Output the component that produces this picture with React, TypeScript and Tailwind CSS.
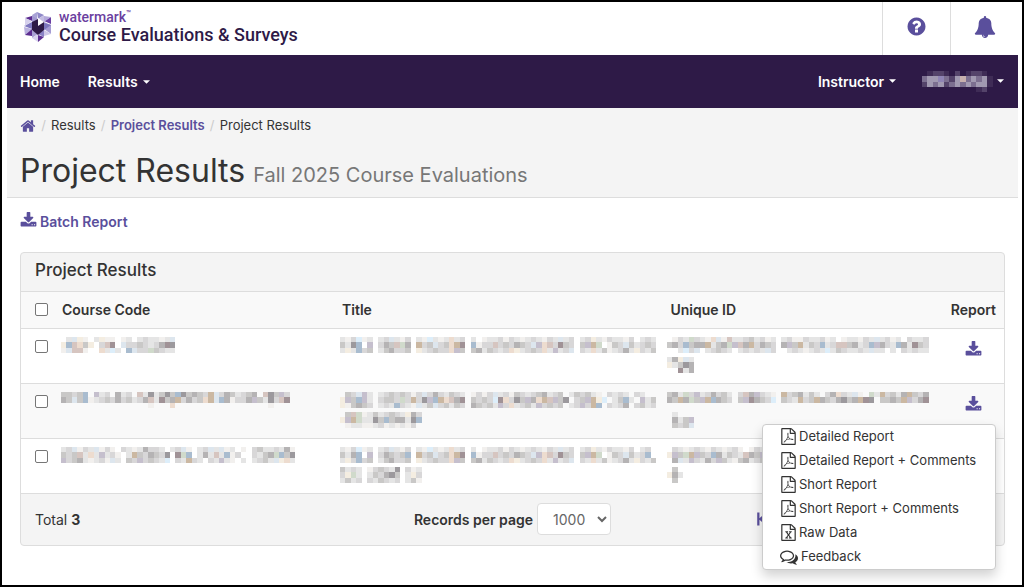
import React from 'react';

const PATHS = {
  home: 'M1472 992v480q0 26-19 45t-45 19h-384v-384h-256v384h-384q-26 0-45-19t-19-45v-480q0-1 .5-3t.5-3l575-474 575 474q1 2 1 6zm223-69l-62 74q-8 9-21 11h-3q-13 0-21-7l-692-577-692 577q-12 8-24 7-13-2-21-11l-62-74q-8-10-7-23.5t11-21.5l719-599q32-26 76-26t76 26l244 204v-195q0-14 9-23t23-9h192q14 0 23 9t9 23v408l219 182q10 8 11 21.5t-7 23.5z',
  help: 'M1024 1376v-192q0-14-9-23t-23-9h-192q-14 0-23 9t-9 23v192q0 14 9 23t23 9h192q14 0 23-9t9-23zm256-672q0-88-55.5-163t-138.5-116-170-41q-243 0-371 213-15 24 8 42l132 100q7 6 19 6 16 0 25-12 53-68 86-92 34-24 86-24 48 0 85.5 26t37.5 59q0 38-20 61t-68 45q-63 28-115.5 86.5t-52.5 125.5v36q0 14 9 23t23 9h192q14 0 23-9t9-23q0-19 21.5-49.5t54.5-49.5q32-18 49-28.5t46-35 44.5-48 28-60.5 12.5-81zm384 192q0 209-103 385.5t-279.5 279.5-385.5 103-385.5-103-279.5-279.5-103-385.5 103-385.5 279.5-279.5 385.5-103 385.5 103 279.5 279.5 103 385.5z',
  bell: 'M912 1696q0-16-16-16-59 0-101.5-42.5t-42.5-101.5q0-16-16-16t-16 16q0 73 51.5 124.5t124.5 51.5q16 0 16-16zm816-288q0 52-38 90t-90 38h-448q0 106-75 181t-181 75-181-75-75-181h-448q-52 0-90-38t-38-90q50-42 91-88t85-119.5 74.5-158.5 50-206 19.5-260q0-152 117-282.5t307-158.5q-8-19-8-39 0-40 28-68t68-28 68 28 28 68q0 20-8 39 190 28 307 158.5t117 282.5q0 139 19.5 260t50 206 74.5 158.5 85 119.5 91 88z',
  download: 'M1344 1344q0-26-19-45t-45-19-45 19-19 45 19 45 45 19 45-19 19-45zm256 0q0-26-19-45t-45-19-45 19-19 45 19 45 45 19 45-19 19-45zm128-224v320q0 40-28 68t-68 28h-1472q-40 0-68-28t-28-68v-320q0-40 28-68t68-28h465l135 136q58 56 136 56t136-56l136-136h464q40 0 68 28t28 68zm-325-569q17 41-14 70l-448 448q-18 19-45 19t-45-19l-448-448q-31-29-14-70 17-39 59-39h256v-448q0-26 19-45t45-19h256q26 0 45 19t19 45v448h256q42 0 59 39z',
  pdf: 'M1596 380q28 28 48 76t20 88v1152q0 40-28 68t-68 28h-1344q-40 0-68-28t-28-68v-1600q0-40 28-68t68-28h896q40 0 88 20t76 48zm-444-244v376h376q-10-29-22-41l-313-313q-12-12-41-22zm384 1528v-1024h-416q-40 0-68-28t-28-68v-416h-768v1536h1280zm-514-593q33 26 84 56 59-7 117-7 147 0 177 49 16 22 2 52 0 1-1 2l-2 2v1q-6 38-71 38-48 0-115-20t-130-53q-221 24-392 83-153 262-242 262-15 0-28-7l-24-12q-1-1-6-5-10-10-6-36 9-40 56-91.5t132-96.5q14-9 23 6 2 2 2 4 52-85 107-197 68-136 104-262-24-82-30.5-159.5t6.5-127.5q11-40 42-40h22q23 0 35 15 18 21 9 68-2 6-4 8 1 3 1 8v30q-2 123-14 192 55 164 146 238zm-576 411q52-24 137-158-51 40-87.5 84t-49.5 74zm398-920q-15 42-2 132 1-7 7-44 0-3 7-43 1-4 4-8-1-1-1-2t-1-2q-1-22-13-36 0 1-1 2v2zm-124 661q135-54 284-81-2-1-13-9.5t-16-13.5q-76-67-127-176-27 86-83 197-30 56-45 83zm646-16q-24-24-140-24 76 28 124 28 14 0 18-1 0-1-2-3z',
  excel: 'M1596 380q28 28 48 76t20 88v1152q0 40-28 68t-68 28h-1344q-40 0-68-28t-28-68v-1600q0-40 28-68t68-28h896q40 0 88 20t76 48zm-444-244v376h376q-10-29-22-41l-313-313q-12-12-41-22zm384 1528v-1024h-416q-40 0-68-28t-28-68v-416h-768v1536h1280zm-979-234v106h281v-106h-75l103-161q5-7 10-16.5t7.5-13.5 3.5-4h2q1 4 5 10 2 4 4.5 7.5t6 8 6.5 8.5l107 161h-76v106h291v-106h-68l-192-273 195-282h67v-107h-279v107h74l-103 159q-4 7-10 16.5t-9 13.5l-2 3h-2q-1-4-5-10-6-11-17-23l-106-159h76v-107h-290v107h68l189 272-194 283h-68z',
  comments: 'M704 384q-153 0-286 52t-211.5 141-78.5 191q0 82 53 158t149 132l97 56-35 84q34-20 62-39l44-31 53 10q78 14 153 14 153 0 286-52t211.5-141 78.5-191-78.5-191-211.5-141-286-52zm0-128q191 0 353.5 68.5t256.5 186.5 94 257-94 257-256.5 186.5-353.5 68.5q-86 0-176-16-124 88-278 128-36 9-86 16h-3q-11 0-20.5-8t-11.5-21q-1-3-1-6.5t.5-6.5 2-6l2.5-5 3.5-5.5 4-5 4.5-5 4-4.5q5-6 23-25t26-29.5 22.5-29 25-38.5 20.5-44q-124-72-195-177t-71-224q0-139 94-257t256.5-186.5 353.5-68.5zm822 1169q10 24 20.5 44t25 38.5 22.5 29 26 29.5 23 25q1 1 4 4.5t4.5 5 4 5 3.5 5.5l2.5 5 2 6 .5 6.5-1 6.5q-3 14-13 22t-22 7q-50-7-86-16-154-40-278-128-90 16-176 16-271 0-472-132 58 4 88 4 161 0 309-45t264-129q125-92 192-212t67-254q0-77-23-152 129 71 204 178t75 230q0 120-71 224.5t-195 176.5z',
  first: 'M320 256h224v560l640-560v1280l-640-560v560h-224z',
  last: 'M1472 256h-224v560l-640-560v1280l640-560v560h224z',
};

type IconName = keyof typeof PATHS;

function Icon({ name, className }: { name: IconName; className: string }) {
  return (
    <svg viewBox="0 0 1792 1792" fill="currentColor" aria-hidden="true" className={className}>
      <path d={PATHS[name]} />
    </svg>
  );
}

function Caret() {
  return (
    <svg viewBox="0 0 8 4" fill="currentColor" aria-hidden="true" className="h-1 w-[7px]">
      <path d="M0 0h8L4 4z" />
    </svg>
  );
}

const TONES: Record<string, string> = {
  a: '#f2f0ee', b: '#e5e5e5', c: '#d8d7d8', d: '#c9c8c7', e: '#b5b3b4', f: '#9c999d', s: '#a09296',
  o: '#eddccf', p: '#d6c5c0', t: '#cbb8a2', u: '#a9bccf', l: '#dde6ee', w: '#ddeefa',
  g: '#d0dacb', m: '#c5bfcd', y: '#f4ede1',
  1: '#3f2c56', 2: '#54436a', 3: '#7c6f90', 4: '#a199b1', 5: '#c7b0ae', 6: '#8f84b4',
};

const CELL = 5.45;

/** Pixelated stand-in for a private value: one character per mosaic cell. */
function Mosaic({ rows }: { rows: string[] }) {
  const cols = Math.max(...rows.map((r) => r.length));
  return (
    <svg
      aria-hidden="true"
      width={cols * CELL}
      height={rows.length * CELL}
      viewBox={`0 0 ${cols} ${rows.length}`}
      preserveAspectRatio="none"
      shapeRendering="crispEdges"
      className="block max-w-none"
    >
      {rows.flatMap((row, y) =>
        [...row].map((ch, x) =>
          TONES[ch] ? <rect key={`${x}-${y}`} x={x} y={y} width="1" height="1" fill={TONES[ch]} /> : null,
        ),
      )}
    </svg>
  );
}

function Lines({ lines }: { lines: string[][] }) {
  return (
    <div className="flex flex-col gap-1">
      {lines.map((rows, i) => (
        <Mosaic key={i} rows={rows} />
      ))}
    </div>
  );
}

const RECORDS = [
  {
    code: [['.blya.byaa.ab.bcbbabl', 'yupody.cps.lccdcbcesf', 'alppa..obwb.ulccgdcbb']],
    title: [
      [
        'bacwab.bclbac.bawbabobc.b.abbcacbabcbacblbc.bcybacbbac.bcb',
        'dbfu.m.cedpge.tcdlcdots.uaccpcdcedclmopcsdc.dmtg.adcldbcdc',
        'bybucd.bdeccd.ybcdccomd.debdcbcoybcdcobmbcl.cbobdabcebycbd',
      ],
    ],
    uid: [
      [
        '.acbgcbaolapbbcdbcab.bcaacbbcab.abbacblbcab.cbbc',
        'decudeetbdegmpetcedc.emdtbdcubcppdebcumecbuebsdc',
        '..bwcl.bcdcb.bcbcblc..bcbabcbwbdcbbcblbb.b.cbcbb',
      ],
      ['beylb', 'ybdfe', '..sbe'],
    ],
  },
  {
    code: [
      [
        'ddcdu.mbc.ebc.pbfbdfdufdeditlcedbcde.pfdmce'.replace('i', 'c').slice(0, 42),
        'edlduabcdcecdbcepbsdetcecdotlueaccemdbfcpsd'.slice(0, 42),
        '................a...o.................a...',
      ],
    ],
    title: [
      [
        '.dclmb.bcdcdcaclcecbdcb.acaclbcadcbcdebcd.bdcdba.cbcb.cb.',
        'ymdumb.cddcgctcfmutopes.dcdcwsocfdmeotpmdf.cdmtyw.bdub.mbd',
        'yadedc.bcbucbalbdlcdbdc.edcdbmcobcdbmcdcd.bcmctu.cbce.cdbc',
      ],
      ['.dpgabdbcdcbyec', 'ymtgbbfdudeebfu', '.abbaabcababac.'],
    ],
    uid: [
      [
        'debgcmbcecdb.cpemcba.tcdebdb.ceocbla.gbtcdbetdce',
        'edtegdmtuedc.dmsedcw.dcbtcdtedcefdetsf.ddedtmces',
        '................................................',
      ],
      ['.b...', '.ebdm', '.dcdl'],
    ],
  },
  {
    code: [
      [
        'bclacblaca.cbabeccb.bcla.bclblab.a.cdbbcbea',
        'dcdpbobmbca.btdcedcf.sgu.bebpbuac..cbdegudf',
        'mcdebabcalb.dcmcdcbw.cbtcb.cbmba.b.bcdblyob',
      ],
    ],
    title: [
      [
        'bacwab.bclbac.bawbabobc.b.abbcacbabcbacblbc.bcybacbbac.bc.',
        'dbeu.m.cedcdu.tcdlcdots.uaccpcdcedclmopcsdc.dmtg.adcldbcu.',
        'bycucd.bdeccd.ybcdccomd.debdcbcoybcdcobmbcl.cbobdabcebycbd',
      ],
      ['dbcb.acdcbf.cab', 'cygb.bdcefd.byc', 'bdbc.cbdcbc.bda'],
    ],
    uid: [
      ['.cbabcbacbabca.acbcb', 'ymdgtmdcuebdcbpedmfb', '.elbmcbecmdbadebcdbc'],
      ['.d...', 'yeb..', '.d...'],
    ],
  },
];

const MENU: { label: string; icon: IconName }[] = [
  { label: 'Detailed Report', icon: 'pdf' },
  { label: 'Detailed Report + Comments', icon: 'pdf' },
  { label: 'Short Report', icon: 'pdf' },
  { label: 'Short Report + Comments', icon: 'pdf' },
  { label: 'Raw Data', icon: 'excel' },
  { label: 'Feedback', icon: 'comments' },
];

function Logo() {
  return (
    <svg viewBox="0 0 28 30" aria-hidden="true" className="h-[30px] w-7">
      <path d="M13 0l7 3-6 4z" fill="#8f89c8" />
      <path d="M13 0v7l-5-4z" fill="#a8a3d6" />
      <path d="M20 3v7l-6-3z" fill="#c3bce2" />
      <path d="M27 5v7l-7-3z" fill="#6a3fa3" />
      <path d="M20 4l7 1-7 5z" fill="#b3a9da" />
      <path d="M1 6l7-2v5z" fill="#5c2d91" />
      <path d="M8 3l6 4-6 4z" fill="#a198d0" />
      <path d="M8 10L0 14l8 3z" fill="#7f78c0" />
      <path d="M1 6l7 3-7 5z" fill="#d5d0ec" />
      <path d="M20 10l7 3v9l-7-5z" fill="#a59cd3" />
      <path d="M27 13l-7 5v-7z" fill="#7d76bd" />
      <path d="M27 22l-7-4v6z" fill="#cfc8e8" />
      <path d="M0 15l8 2-7 6z" fill="#b8b0de" />
      <path d="M1 23l7-6v7z" fill="#5c2d91" />
      <path d="M8 18l6 4-6 4z" fill="#a9a0d4" />
      <path d="M20 18v7l-6-3z" fill="#8a82c5" />
      <path d="M14 22v8l-6-4z" fill="#d8d2ee" />
      <path d="M14 23l6 2-6 5z" fill="#5c2d91" />
      <path d="M8 10l6-3 6 3v8l-6 5-6-5z" fill="#2e1a47" />
      <path d="M14 6l6 4-6 4z" fill="#fff" />
    </svg>
  );
}

const CHECK =
  'block h-[13px] w-[13px] appearance-none rounded-[2px] border border-[#767676] bg-white checked:bg-[#5a4f9c]';

export default function App() {
  return (
    <div className="min-h-screen border-2 border-black bg-white pr-1 pl-[5px] font-[Inter,sans-serif] text-[13px] text-[#333]">
      <header className="flex h-[53px] items-stretch justify-between">
        <a href="#home" className="flex items-center gap-[7px] pb-1 pl-[17px]">
          <Logo />
          <span className="flex flex-col font-[Roboto,sans-serif]">
            <span className="flex items-start text-[14px] leading-4 font-medium text-[#6b3fa0]">
              watermark<span className="text-[8px] leading-[10px]">™</span>
            </span>
            <span className="text-[18px] leading-5 font-medium text-[#2e1a47]">
              Course Evaluations &amp; Surveys
            </span>
          </span>
        </a>
        <div className="flex text-[#5a4f9c]">
          <button aria-label="Help" className="flex w-[68px] items-center justify-center border-l border-[#ddd] pb-1">
            <Icon name="help" className="h-[21px] w-[21px]" />
          </button>
          <button aria-label="Notifications" className="flex w-[68px] items-center justify-center border-l border-[#ddd] pb-1">
            <Icon name="bell" className="h-[22px] w-[22px]" />
          </button>
        </div>
      </header>

      <nav className="flex h-[53px] items-center justify-between bg-[#2e1a47] pr-[14px] pl-[13px] text-[14px] font-semibold text-white">
        <div className="flex items-center gap-7">
          <a href="#home">Home</a>
          <button className="flex items-center gap-[5px]">
            Results <Caret />
          </button>
        </div>
        <div className="flex items-center gap-[26px]">
          <button className="flex items-center gap-[5px]">
            Instructor <Caret />
          </button>
          <button aria-label="Account" className="flex items-center gap-1">
            <Mosaic rows={['.1221.2.1221.', '3446324534341', '2434234343441', '..........12.']} />
            <Caret />
          </button>
        </div>
      </nav>

      <section className="h-[90px] border-b border-[#ddd] bg-[#f4f4f4] px-[13px]">
        <ol className="flex h-9 items-center text-[13px]">
          <li>
            <a href="#home" aria-label="Home" className="text-[#5a4f9c]">
              <Icon name="home" className="h-4 w-4" />
            </a>
          </li>
          <li aria-hidden="true" className="w-[15px] text-center text-[#ccc]">/</li>
          <li>Results</li>
          <li aria-hidden="true" className="w-[15px] text-center text-[#ccc]">/</li>
          <li>
            <a href="#project" className="font-semibold text-[#5a4f9c]">Project Results</a>
          </li>
          <li aria-hidden="true" className="w-[15px] text-center text-[#ccc]">/</li>
          <li>Project Results</li>
        </ol>
        <h1 className="flex items-baseline gap-2 text-[32px] leading-[54px]">
          Project Results
          <small className="text-[20px] text-[#777]">Fall 2025 Course Evaluations</small>
        </h1>
      </section>

      <main className="px-[13px] pb-8">
        <div className="flex h-[54px] items-start pt-[14px]">
          <a href="#batch" className="flex items-start gap-[3px] text-[14px] leading-5 font-semibold text-[#5a4f9c]">
            <Icon name="download" className="h-[17px] w-[17px]" />
            Batch Report
          </a>
        </div>

        <section className="rounded border border-[#ddd] bg-[#f4f4f4]">
          <h2 className="flex h-[39px] items-center border-b border-[#ddd] px-[14px] pb-[2px] text-[17px] font-medium">
            Project Results
          </h2>
          <table className="w-full table-fixed border-collapse bg-white text-left">
            <colgroup>
              <col className="w-[34px]" />
              <col className="w-[29%]" />
              <col className="w-[33%]" />
              <col />
              <col className="w-[62px]" />
            </colgroup>
            <thead className="bg-[#f9f9f9] text-[14px]">
              <tr className="h-9 border-b border-[#ddd]">
                <th className="pl-[14px]">
                  <input type="checkbox" aria-label="Select all" className={CHECK} />
                </th>
                <th className="pl-[7px] font-semibold">Course Code</th>
                <th className="pl-[2px] font-semibold">Title</th>
                <th className="pl-[6px] font-semibold">Unique ID</th>
                <th className="pr-2 text-right font-semibold">Report</th>
              </tr>
            </thead>
            <tbody>
              {RECORDS.map((record, i) => (
                <tr key={i} className="h-[55px] border-b border-[#ddd] align-top even:bg-[#f9f9f9]">
                  <td className="pt-[11px] pl-[14px]">
                    <input type="checkbox" aria-label={`Select record ${i + 1}`} className={CHECK} />
                  </td>
                  <td className="pt-2 pl-[6px]">
                    <Lines lines={record.code} />
                  </td>
                  <td className="pt-2">
                    <Lines lines={record.title} />
                  </td>
                  <td className="pt-2 pl-[3px]">
                    <Lines lines={record.uid} />
                  </td>
                  <td className="pt-3 pr-2">
                    <div className="relative flex justify-end pr-[14px]">
                      <button aria-label="Download report" className="text-[#5a4f9c]">
                        <Icon name="download" className="h-[17px] w-[17px]" />
                      </button>
                      {i === 1 && (
                        <ul className="absolute top-[28px] right-0 z-10 w-[234px] rounded border border-[#ccc] bg-white shadow-[0_6px_12px_rgba(0,0,0,0.18)]">
                          {MENU.map((item) => (
                            <li key={item.label}>
                              <a href="#report" className="flex h-6 items-center gap-[2px] pl-[17px] text-[13px]">
                                <Icon
                                  name={item.icon}
                                  className={item.icon === 'comments' ? 'mr-px h-[18px] w-[18px]' : 'h-[17px] w-[17px]'}
                                />
                                {item.label}
                              </a>
                            </li>
                          ))}
                        </ul>
                      )}
                    </div>
                  </td>
                </tr>
              ))}
            </tbody>
          </table>
          <footer className="grid h-[51px] grid-cols-3 items-center px-[14px]">
            <p className="text-[14px]">
              Total <b>3</b>
            </p>
            <div className="flex items-center justify-center gap-1">
              <label htmlFor="per-page" className="text-[14px] font-semibold whitespace-nowrap">
                Records per page
              </label>
              <select
                id="per-page"
                defaultValue="1000"
                className="h-8 w-[74px] rounded border border-[#ddd] bg-white pl-[11px] text-[14px] text-[#666]"
              >
                <option>1000</option>
              </select>
            </div>
            <div className="flex justify-end text-[#5a4f9c]">
              <div className="flex w-[236px] items-center justify-between">
                <button aria-label="First page">
                  <Icon name="first" className="h-[18px] w-[18px]" />
                </button>
                <button aria-label="Last page">
                  <Icon name="last" className="h-[18px] w-[18px]" />
                </button>
              </div>
            </div>
          </footer>
        </section>
      </main>
    </div>
  );
}
